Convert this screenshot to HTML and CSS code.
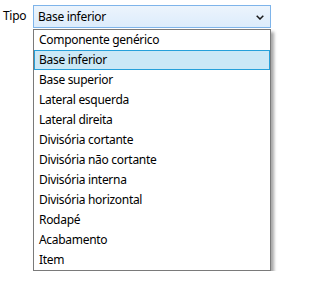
FILE: index.html
```html
<!DOCTYPE html>
<html lang="pt">
<head>
<meta charset="utf-8">
<link rel="stylesheet" href="styles.css">
</head>
<body>
<div class="field">
  <span class="label">Tipo</span>
  <div class="combo-wrap">
    <div class="combo">
      <span class="combo-text">Base inferior</span>
      <svg class="chevron" width="8" height="5" viewBox="0 0 8 5"><path d="M0.7 0.7 L4 4 L7.3 0.7" fill="none" stroke="#1a1a1a" stroke-width="1.5"/></svg>
    </div>
    <ul class="list">
      <li>Componente genérico</li>
      <li class="selected">Base inferior</li>
      <li>Base superior</li>
      <li>Lateral esquerda</li>
      <li>Lateral direita</li>
      <li>Divisória cortante</li>
      <li>Divisória não cortante</li>
      <li>Divisória interna</li>
      <li>Divisória horizontal</li>
      <li>Rodapé</li>
      <li>Acabamento</li>
      <li>Item</li>
    </ul>
  </div>
</div>
</body>
</html>
```
FILE: styles.css
```css
html, body {
  margin: 0;
  padding: 0;
  background: #ffffff;
}
body {
  font-family: "Noto Sans", "Open Sans", sans-serif;
  font-size: 12px;
  letter-spacing: -0.3px;
  color: #000000;
}
.field {
  display: flex;
  align-items: flex-start;
  padding: 5px 0 0 3px;
}
.label {
  width: 30px;
  height: 23px;
  line-height: 22px;
}
.combo-wrap {
  display: flex;
  flex-direction: column;
}
.combo {
  box-sizing: border-box;
  width: 238px;
  height: 23px;
  border: 1px solid #7eb4ea;
  background: linear-gradient(#ecf4fc, #dcecfc);
  display: flex;
  align-items: center;
  justify-content: space-between;
  padding: 0 6px 0 4px;
}
.combo-text {
  line-height: 20px;
}
.chevron {
  display: block;
  margin-top: 1px;
}
.list {
  box-sizing: border-box;
  list-style: none;
  margin: 1px 0 0 0;
  padding: 0;
  width: 238px;
  border: 1px solid #7a7a7a;
  background: #ffffff;
  box-shadow: 3px 3px 3px rgba(0, 0, 0, 0.35);
}
.list li {
  box-sizing: border-box;
  height: 20px;
  line-height: 18px;
  padding: 0 4px;
  border: 1px solid transparent;
  white-space: nowrap;
}
.list li.selected {
  background: #cbe8f6;
  border-color: #26a0da;
}
```
